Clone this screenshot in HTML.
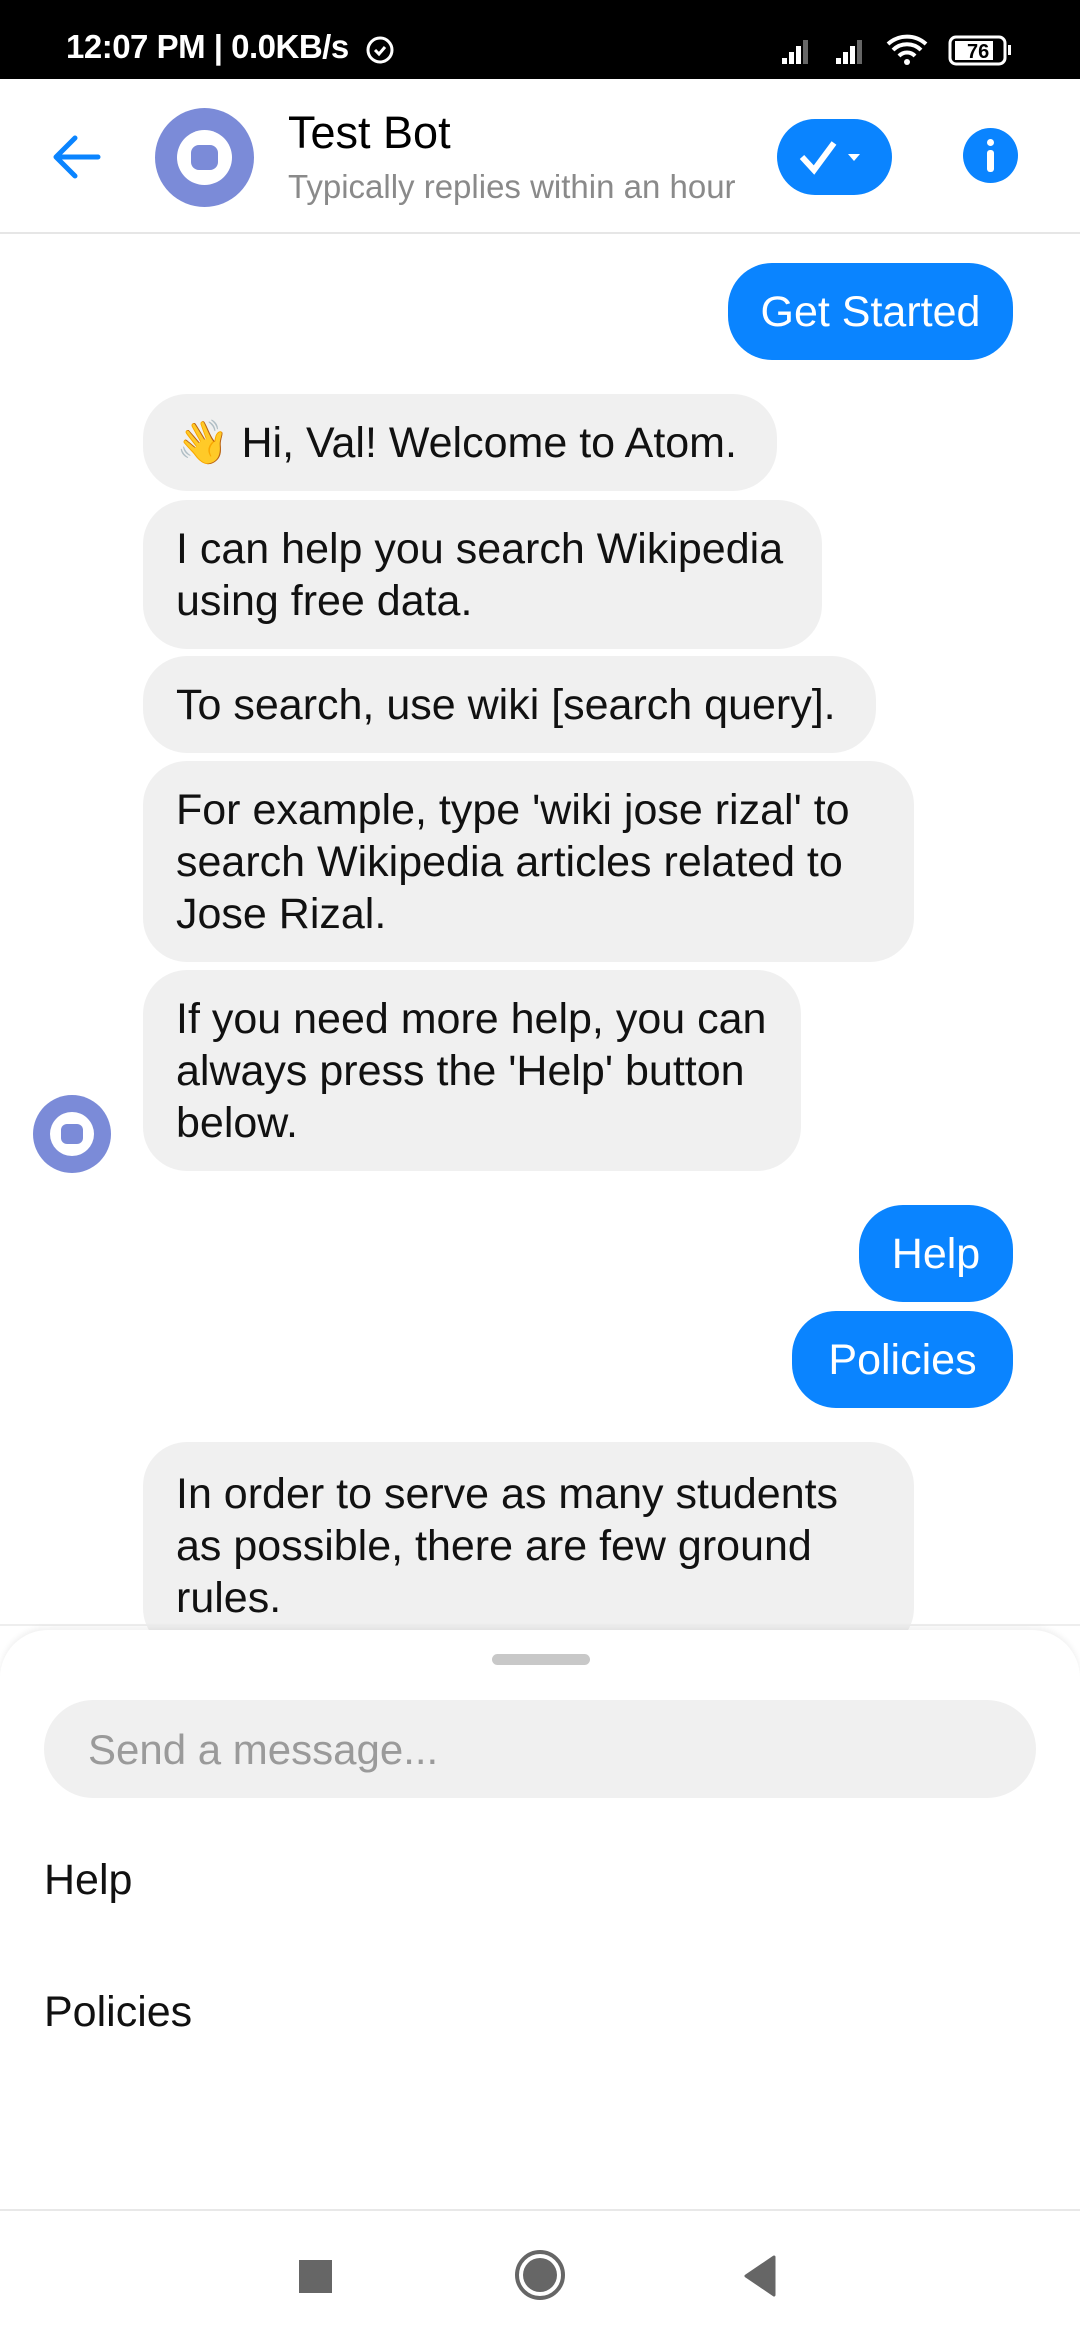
<!DOCTYPE html>
<html><head><meta charset="utf-8"><style>
*{margin:0;padding:0;box-sizing:border-box}
body{width:1080px;height:2340px;overflow:hidden;background:#fff;font-family:"Liberation Sans",sans-serif;position:relative}
.abs{position:absolute}
.status{left:0;top:0;width:1080px;height:79px;background:#000;color:#fff;font-size:33px;font-weight:bold}
.header{left:0;top:79px;width:1080px;height:155px;background:#fff;border-bottom:2px solid #e6e6e6}
.b{position:absolute;font-size:43px;line-height:52px;color:#111;border-radius:44px;padding:0 33px;display:flex;align-items:center;white-space:nowrap}
.g{background:#f0f0f0;left:143px}
.u{background:#0a84ff;color:#fff}
.sheet{left:0;top:1630px;width:1080px;height:580px;background:#fff;border-radius:48px 48px 0 0;box-shadow:0 -3px 6px rgba(0,0,0,0.06)}
</style></head><body>
<div class="abs status">
 <div class="abs" style="left:66px;top:28px;letter-spacing:-0.5px">12:07 PM | 0.0KB/s</div>
 <svg class="abs" style="left:362px;top:30px" width="36" height="36" viewBox="0 0 36 36"><circle cx="18" cy="20" r="12" fill="none" stroke="#fff" stroke-width="3"/><path d="M13 20l4 4 6-7" fill="none" stroke="#fff" stroke-width="3"/></svg>
 <svg class="abs" style="left:780px;top:32px" width="240" height="36" viewBox="0 0 240 36">
  <g fill="#fff"><rect x="2" y="26" width="5" height="6"/><rect x="9" y="20" width="5" height="12"/><rect x="16" y="14" width="5" height="18"/><rect x="23" y="8" width="5" height="24" fill="#666"/>
  <rect x="56" y="26" width="5" height="6"/><rect x="63" y="20" width="5" height="12"/><rect x="70" y="14" width="5" height="18"/><rect x="77" y="8" width="5" height="24" fill="#666"/></g>
  <path d="M108 12a28 28 0 0 1 38 0M113 18a20 20 0 0 1 28 0M119 24a11 11 0 0 1 16 0" fill="none" stroke="#fff" stroke-width="4"/><circle cx="127" cy="30" r="3" fill="#fff"/>
  <rect x="170" y="5" width="55" height="27" rx="6" fill="none" stroke="#fff" stroke-width="3"/><rect x="175" y="9" width="38" height="19" fill="#fff"/><rect x="228" y="13" width="3" height="10" fill="#fff"/>
  <text x="187" y="26" font-size="20" font-weight="bold" fill="#000" font-family="Liberation Sans">76</text>
 </svg>
</div>
<div class="abs header">
 <svg class="abs" style="left:50px;top:55px" width="52" height="46" viewBox="0 0 52 46"><path d="M48 23H6M25 4L6 23l19 19" fill="none" stroke="#0a84ff" stroke-width="5" stroke-linecap="round" stroke-linejoin="round"/></svg>
 <div class="abs" style="left:155px;top:29px;width:99px;height:99px;border-radius:50%;background:#7b8bd8"></div>
 <div class="abs" style="left:177px;top:51px;width:55px;height:55px;border-radius:50%;background:#fff"></div>
 <div class="abs" style="left:191px;top:66px;width:27px;height:25px;border-radius:8px;background:#7b8bd8"></div>
 <div class="abs" style="left:288px;top:28px;font-size:45px;color:#000">Test Bot</div>
 <div class="abs" style="left:288px;top:89px;font-size:33px;color:#8a8a8a">Typically replies within an hour</div>
 <div class="abs" style="left:777px;top:40px;width:115px;height:76px;border-radius:38px;background:#0a84ff"></div>
 <svg class="abs" style="left:798px;top:58px" width="80" height="40" viewBox="0 0 80 40"><path d="M4 20l12 13L36 6" fill="none" stroke="#fff" stroke-width="6"/><path d="M50 17h12l-6 7z" fill="#fff"/></svg>
 <div class="abs" style="left:963px;top:49px;width:55px;height:55px;border-radius:50%;background:#0a84ff"></div>
 <div class="abs" style="left:987px;top:60px;width:7px;height:7px;border-radius:50%;background:#fff"></div>
 <div class="abs" style="left:987px;top:71px;width:7px;height:22px;border-radius:3px;background:#fff"></div>
</div>

<div class="b u" style="left:728px;top:263px;width:285px;height:97px;justify-content:center;padding:0">Get Started</div>
<div class="b g" style="top:394px;width:634px;height:97px">👋 Hi, Val! Welcome to Atom.</div>
<div class="b g" style="top:500px;width:679px;height:149px">I can help you search Wikipedia<br>using free data.</div>
<div class="b g" style="top:656px;width:733px;height:97px">To search, use wiki [search query].</div>
<div class="b g" style="top:761px;width:771px;height:201px">For example, type 'wiki jose rizal' to<br>search Wikipedia articles related to<br>Jose Rizal.</div>
<div class="b g" style="top:970px;width:658px;height:201px">If you need more help, you can<br>always press the 'Help' button<br>below.</div>
<div class="abs" style="left:33px;top:1095px;width:78px;height:78px;border-radius:50%;background:#7b8bd8"></div>
<div class="abs" style="left:50px;top:1112px;width:44px;height:44px;border-radius:50%;background:#fff"></div>
<div class="abs" style="left:61px;top:1124px;width:22px;height:20px;border-radius:6px;background:#7b8bd8"></div>
<div class="b u" style="left:859px;top:1205px;width:154px;height:97px;justify-content:center;padding:0">Help</div>
<div class="b u" style="left:792px;top:1311px;width:221px;height:97px;justify-content:center;padding:0">Policies</div>
<div class="b g" style="top:1442px;width:771px;height:210px;align-items:flex-start;padding-top:26px">In order to serve as many students<br>as possible, there are few ground<br>rules.</div>
<div class="abs" style="left:0;top:1624px;width:1080px;height:2px;background:#eee"></div>

<div class="abs sheet">
 <div class="abs" style="left:492px;top:24px;width:98px;height:11px;border-radius:6px;background:#c8c8c8"></div>
 <div class="abs" style="left:44px;top:70px;width:992px;height:98px;border-radius:49px;background:#f0f0f0"></div>
 <div class="abs" style="left:88px;top:96px;font-size:42px;color:#9a9a9a">Send a message...</div>
 <div class="abs" style="left:44px;top:226px;font-size:43px;color:#111">Help</div>
 <div class="abs" style="left:44px;top:358px;font-size:43px;color:#111">Policies</div>
</div>
<div class="abs" style="left:0;top:2209px;width:1080px;height:131px;background:#fff;border-top:2px solid #e8e8e8">
 <div class="abs" style="left:299px;top:49px;width:33px;height:33px;background:#666"></div>
 <div class="abs" style="left:515px;top:39px;width:50px;height:50px;border-radius:50%;border:4px solid #666"></div>
 <div class="abs" style="left:523px;top:47px;width:34px;height:34px;border-radius:50%;background:#666"></div>
 <svg class="abs" style="left:742px;top:44px" width="36" height="42" viewBox="0 0 36 42"><path d="M32 2L4 21l28 19z" fill="#666" stroke="#666" stroke-width="3" stroke-linejoin="round"/></svg>
</div>
</body></html>
